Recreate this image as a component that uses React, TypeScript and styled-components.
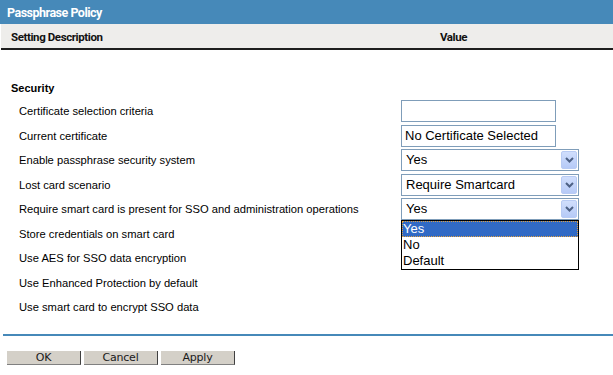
import React from 'react';
import styled, { createGlobalStyle } from 'styled-components';

const GlobalStyle = createGlobalStyle`
    html, body {
        margin: 0;
        padding: 0;
        background: #ffffff;
    }
    body {
        width: 613px;
        height: 375px;
        overflow: hidden;
        font-family: 'Liberation Sans', Arial, sans-serif;
    }
`;

type Setting = {
    label: string;
    kind?: 'text' | 'select';
    value?: string;
    open?: boolean;
};

const settings: Setting[] = [
    { label: 'Certificate selection criteria', kind: 'text', value: '' },
    { label: 'Current certificate', kind: 'text', value: 'No Certificate Selected' },
    { label: 'Enable passphrase security system', kind: 'select', value: 'Yes' },
    { label: 'Lost card scenario', kind: 'select', value: 'Require Smartcard' },
    { label: 'Require smart card is present for SSO and administration operations', kind: 'select', value: 'Yes', open: true },
    { label: 'Store credentials on smart card' },
    { label: 'Use AES for SSO data encryption' },
    { label: 'Use Enhanced Protection by default' },
    { label: 'Use smart card to encrypt SSO data' },
];

const options = ['Yes', 'No', 'Default'];

const Chevron = () => (
    <svg width='9' height='6' viewBox='0 0 9 6'>
        <path d='M1 1 L4.5 4.5 L8 1' fill='none' stroke='#4d6185' strokeWidth='2' />
    </svg>
);

const App = () => {
    return (
        <Page>
            <GlobalStyle />
            <TitleBar>Passphrase Policy</TitleBar>
            <HeaderRow>
                <HeaderCell>Setting Description</HeaderCell>
                <HeaderCell>Value</HeaderCell>
            </HeaderRow>
            <Body>
                <Section>Security</Section>
                {settings.map((s) => (
                    <Row key={s.label}>
                        <Label>{s.label}</Label>
                        <ValueCell>
                            {s.kind === 'text' && <TextBox>{s.value}</TextBox>}
                            {s.kind === 'select' && (
                                <SelectBox>
                                    <SelectText>{s.value}</SelectText>
                                    <ArrowButton><Chevron /></ArrowButton>
                                    {s.open && (
                                        <DropList>
                                            {options.map((o, i) => (
                                                <Option key={o} selected={i === 0}>{o}</Option>
                                            ))}
                                        </DropList>
                                    )}
                                </SelectBox>
                            )}
                        </ValueCell>
                    </Row>
                ))}
            </Body>
            <Footer>
                <ButtonBar>
                    <PlainButton>OK</PlainButton>
                    <PlainButton>Cancel</PlainButton>
                    <PlainButton>Apply</PlainButton>
                </ButtonBar>
            </Footer>
        </Page>
    );
};

export default App;

const Page = styled.div`
    width: 613px;
    height: 375px;
    display: flex;
    flex-direction: column;
    background: #ffffff;
`;

const TitleBar = styled.div`
    height: 24px;
    line-height: 25px;
    padding-left: 7px;
    background: #4689b9;
    color: #ffffff;
    font-family: Roboto, 'DejaVu Sans', sans-serif;
    font-weight: 700;
    font-size: 12.5px;
    letter-spacing: -0.5px;
`;

const HeaderRow = styled.div`
    height: 24px;
    margin-left: 1px;
    display: grid;
    grid-template-columns: 429px 1fr;
    align-items: center;
    background: #eeedeb;
    border-bottom: 2px solid #1e1e1e;
    padding-left: 10px;
`;

const HeaderCell = styled.div`
    font-family: Roboto, 'DejaVu Sans', sans-serif;
    font-weight: 700;
    font-size: 11.5px;
    letter-spacing: -0.4px;
    color: #111111;
    padding-top: 2px;
`;

const Body = styled.div`
    padding-top: 32px;
    flex: 1;
`;

const Section = styled.div`
    padding-left: 11px;
    height: 12px;
    line-height: 12px;
    font-size: 11px;
    font-weight: 700;
    color: #000000;
    margin-bottom: 5px;
`;

const Row = styled.div`
    height: 24.5px;
    display: grid;
    grid-template-columns: 401px 1fr;
    align-items: center;
`;

const Label = styled.div`
    padding-left: 19px;
    font-size: 11.2px;
    color: #000000;
    white-space: nowrap;
`;

const ValueCell = styled.div`
    display: flex;
    align-items: center;
`;

const TextBox = styled.div`
    box-sizing: border-box;
    width: 155px;
    height: 22px;
    border: 1px solid #7f9db9;
    padding-left: 3px;
    line-height: 20px;
    font-size: 13px;
    color: #000000;
    white-space: nowrap;
`;

const SelectBox = styled.div`
    box-sizing: border-box;
    position: relative;
    width: 178px;
    height: 22px;
    border: 1px solid #7f9db9;
    display: flex;
    align-items: center;
    justify-content: space-between;
    padding: 0 1px 0 4px;
    background: #ffffff;
`;

const SelectText = styled.div`
    font-size: 13px;
    line-height: 20px;
    color: #000000;
`;

const ArrowButton = styled.div`
    box-sizing: border-box;
    width: 16px;
    height: 18px;
    border: 1px solid #b8cbf4;
    border-radius: 2px;
    background: linear-gradient(#d0defc, #b6caf7);
    display: flex;
    align-items: center;
    justify-content: center;
`;

const DropList = styled.div`
    position: absolute;
    top: 21px;
    left: -1px;
    width: 178px;
    box-sizing: border-box;
    border: 1px solid #000000;
    background: #ffffff;
    z-index: 2;
`;

const Option = styled.div<{ selected?: boolean }>`
    box-sizing: border-box;
    height: 16px;
    line-height: 15px;
    padding-left: 1px;
    font-size: 13px;
    color: ${(p) => (p.selected ? '#ffffff' : '#000000')};
    background: ${(p) => (p.selected ? '#316ac5' : '#ffffff')};
    outline: ${(p) => (p.selected ? '1px dotted #e0a040' : 'none')};
    outline-offset: -1px;
`;

const Footer = styled.div`
    padding-bottom: 10px;
`;

const ButtonBar = styled.div`
    border-top: 2px solid #4689b9;
    margin-left: 3px;
    padding: 15px 0 0 4px;
    display: flex;
    gap: 3px;
`;

const PlainButton = styled.div`
    box-sizing: border-box;
    width: 74px;
    height: 14px;
    background: #d4d0c8;
    border-right: 1px solid #404040;
    border-bottom: 1px solid #808080;
    text-align: center;
    font-family: 'DejaVu Sans', Tahoma, sans-serif;
    font-size: 11px;
    line-height: 13px;
    letter-spacing: -0.2px;
    color: #1a1a1a;
`;
